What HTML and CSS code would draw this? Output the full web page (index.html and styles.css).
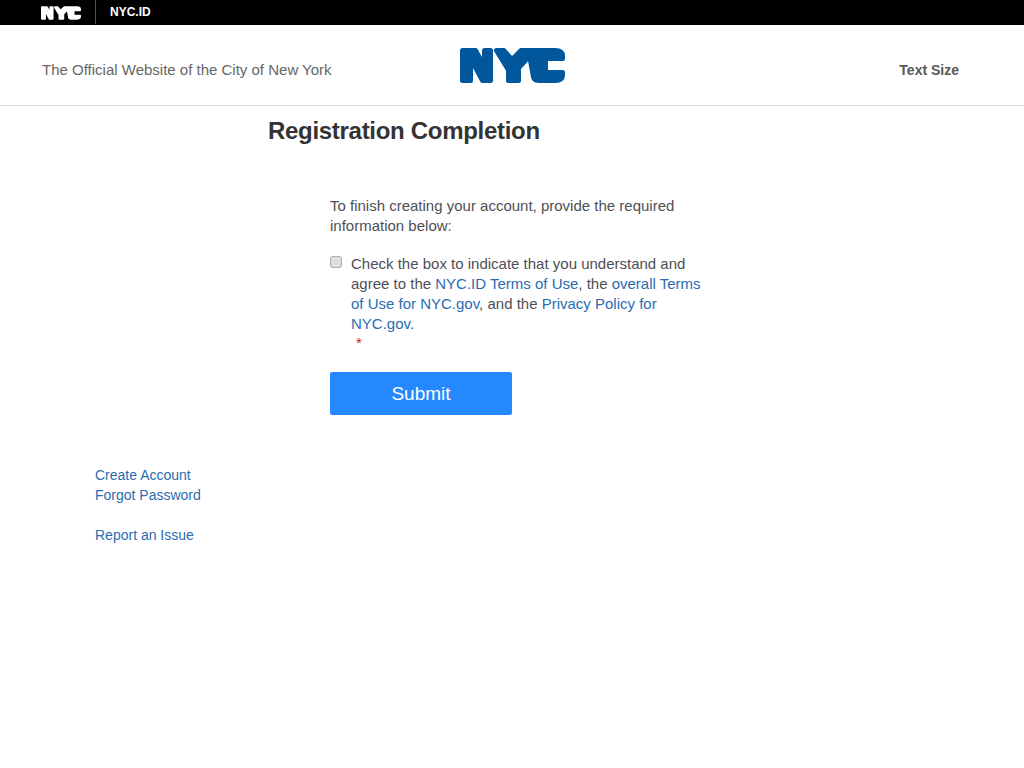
FILE: index.html
```html
<!DOCTYPE html>
<html lang="en">
<head>
    <meta charset="UTF-8">
    <meta name="viewport" content="width=device-width, initial-scale=1.0">
    <title>Registration Completion</title>
    <link rel="stylesheet" href="styles.css">
</head>
<body>
    <svg class="svg-defs" width="0" height="0" aria-hidden="true">
        <symbol id="nycLogo" viewBox="0 0 105 35">
            <path d="M2.5 2.5H15.5L24.5 18.7V2.5H30.5V32.5H22.5L10.5 10V32.5H2.5Z" stroke-width="5" stroke-linejoin="round"/>
            <path d="M36.5 2.5H43.8L51.9 11.7L61 2.5H95Q102.5 2.5 102.5 8V10.5H85.5V24.5H102.5V27Q102.5 32.5 95 32.5H79Q73 32.5 73 26L69.6 7.8L58.5 20V32.5H48.5V22Z" stroke-width="5" stroke-linejoin="round"/>
        </symbol>
    </svg>

    <!-- Black top bar -->
    <div class="top-bar">
        <svg class="top-logo"><use href="#nycLogo"/></svg>
        <div class="top-title">NYC.ID</div>
    </div>

    <!-- Site header -->
    <header class="site-header">
        <div class="site-tagline">The Official Website of the City of New York</div>
        <svg class="site-logo"><use href="#nycLogo"/></svg>
        <div class="text-size">Text Size</div>
    </header>

    <main class="content">
        <h1 class="page-title">Registration Completion</h1>

        <form class="reg-form">
            <p class="intro">To finish creating your account, provide the required information below:</p>
            <div class="terms">
                <input type="checkbox" class="terms-check" id="terms">
                <label class="terms-text" for="terms">
                    Check the box to indicate that you understand and agree to the <a href="#">NYC.ID Terms of Use</a>, the <a href="#">overall Terms of Use for NYC.gov</a>, and the <a href="#">Privacy Policy for NYC.gov</a>.
                    <span class="required">*</span>
                </label>
            </div>
            <button type="button" class="submit-btn">Submit</button>
        </form>

        <!-- Side links -->
        <nav class="side-links">
            <a href="#">Create Account</a>
            <a href="#">Forgot Password</a>
            <a href="#" class="report-link">Report an Issue</a>
        </nav>
    </main>
</body>
</html>
```

FILE: styles.css
```css
* {
    margin: 0;
    padding: 0;
    box-sizing: border-box;
}

body {
    font-family: "Liberation Sans", Arial, sans-serif;
    font-size: 15px;
    line-height: 20px;
    color: #4f4f55;
    background: #ffffff;
}

a {
    color: #2a6cb0;
    text-decoration: none;
}

.svg-defs {
    display: block;
    height: 0;
}

.top-bar {
    display: flex;
    align-items: center;
    height: 25px;
    padding-left: 41px;
    background: #000000;
}

.top-logo {
    width: 40px;
    height: 14px;
    fill: #ffffff;
    stroke: #ffffff;
}

.top-title {
    height: 24px;
    align-self: flex-start;
    margin-left: 14px;
    padding-left: 14px;
    border-left: 1px solid #555555;
    font-size: 12px;
    font-weight: bold;
    line-height: 24px;
    color: #ffffff;
}

.site-header {
    display: flex;
    align-items: center;
    height: 81px;
    padding: 0 65px 1px 42px;
    border-bottom: 1px solid #d8d8d8;
}

.site-tagline {
    width: 418px;
    margin-top: 10px;
    color: #666666;
}

.site-logo {
    width: 105px;
    height: 35px;
    margin-top: 2px;
    fill: #00579c;
    stroke: #00579c;
}

.text-size {
    margin: 10px 0 0 auto;
    font-size: 14px;
    font-weight: bold;
    color: #595959;
}

.content {
    padding: 9px 0 0 95px;
}

.page-title {
    margin-left: 173px;
    font-size: 24px;
    line-height: 32px;
    letter-spacing: -0.3px;
    color: #333333;
}

.reg-form {
    width: 374px;
    margin: 49px 0 0 235px;
}

.terms {
    display: flex;
    align-items: flex-start;
    margin-top: 18px;
}

.terms-check {
    flex: none;
    width: 12px;
    height: 12px;
    margin: 2px 9px 0 0;
    appearance: none;
    border: 1px solid #ababab;
    border-radius: 3px;
    background: #dedede;
}

.terms-text {
    flex: 1;
}

.required {
    display: block;
    margin: -1px 0 0 5px;
    color: #c0281e;
}

.submit-btn {
    display: block;
    width: 182px;
    height: 43px;
    margin-top: 19px;
    border: none;
    border-radius: 2px;
    background: #2688ff;
    color: #ffffff;
    font-family: inherit;
    font-size: 19px;
}

.side-links {
    display: flex;
    flex-direction: column;
    align-items: flex-start;
    margin-top: 50px;
    font-size: 14px;
}

.report-link {
    margin-top: 20px;
}
```
